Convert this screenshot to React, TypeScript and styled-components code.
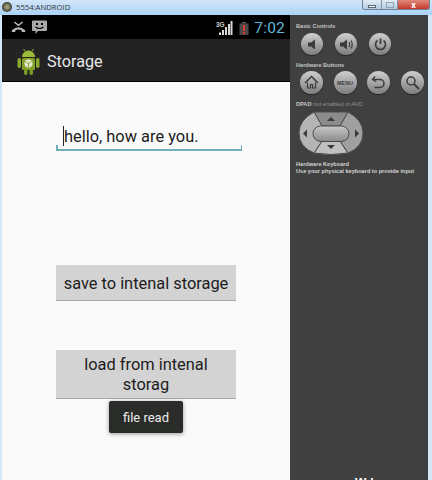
import styled, { createGlobalStyle } from "styled-components";

const GlobalStyle = createGlobalStyle`
  html, body {
    margin: 0;
    padding: 0;
    background: #fff;
  }
  * {
    box-sizing: border-box;
  }
`;

const Window = styled.div`
  width: 432px;
  height: 480px;
  overflow: hidden;
  display: flex;
  flex-direction: column;
  background: #d5e7f6;
  font-family: Roboto, "Liberation Sans", sans-serif;
`;

const TitleBar = styled.div`
  height: 15px;
  flex: none;
  display: flex;
  align-items: flex-start;
  padding-left: 2px;
  background: linear-gradient(#d3e6f8, #a9d3f6);
`;

const TitleIcon = styled.div`
  width: 10px;
  height: 10px;
  margin-top: 2px;
  border-radius: 50%;
  background: radial-gradient(circle, #9a9a70 20%, #30302a 75%);
`;

const TitleText = styled.span`
  margin: 1px 0 0 4px;
  font-family: "Open Sans", "Liberation Sans", sans-serif;
  font-size: 7.7px;
  line-height: 12px;
  color: #333;
`;

const WindowControls = styled.div`
  margin-left: auto;
  margin-right: 2px;
  height: 10px;
  display: flex;
  border: 1px solid #6d8296;
  border-top: 0;
  border-radius: 0 0 3px 3px;
  overflow: hidden;
`;

const WindowButton = styled.div<{ $width: number; $close?: boolean }>`
  width: ${(props) => props.$width}px;
  display: flex;
  align-items: center;
  justify-content: center;
  color: #fff;
  font-size: 9px;
  font-weight: 700;
  background: ${(props) =>
    props.$close
      ? "linear-gradient(#e08a7c, #c5382c)"
      : "linear-gradient(#e2edf6, #b5cbdf)"};
  & + & {
    border-left: 1px solid #7f93a5;
  }
`;

const MinGlyph = styled.div`
  width: 8px;
  height: 3px;
  margin-top: 3px;
  background: #fff;
  border: 1px solid #56687a;
`;

const MaxGlyph = styled.div`
  width: 8px;
  height: 6px;
  background: transparent;
  border: 1px solid #8fa2b4;
`;

const Body = styled.div`
  flex: 1;
  min-height: 0;
  display: flex;
  padding-left: 2px;
  padding-right: 4px;
`;

const Device = styled.div`
  width: 288px;
  flex: none;
  display: flex;
  flex-direction: column;
  background: #fafafa;
`;

const StatusBar = styled.div`
  height: 24px;
  flex: none;
  display: flex;
  align-items: center;
  padding: 0 5px 0 9px;
  background: #000;
`;

const StatusLeft = styled.div`
  display: flex;
  align-items: center;
  gap: 6px;
`;

const StatusRight = styled.div`
  margin-left: auto;
  display: flex;
  align-items: center;
  padding-top: 2px;
`;

const Clock = styled.span`
  margin-left: 5px;
  font-size: 15.5px;
  letter-spacing: 0.2px;
  color: #62b7d6;
`;

const ActionBar = styled.div`
  height: 43px;
  flex: none;
  display: flex;
  align-items: center;
  padding: 3px 0 0 15px;
  gap: 7px;
  background: #232323;
  border-bottom: 1px solid #000;
`;

const AppTitle = styled.span`
  font-size: 16.2px;
  color: #e8e8e8;
`;

const Content = styled.div`
  position: relative;
  flex: 1;
  display: flex;
  flex-direction: column;
  align-items: flex-start;
  padding: 41px 0 0 54px;
`;

const InputField = styled.div`
  position: relative;
  width: 186px;
  height: 28px;
  padding-left: 7px;
  font-size: 16.4px;
  line-height: 27px;
  color: #1c1c1c;
  border-bottom: 2px solid #6fb0bd;
  &::before,
  &::after {
    content: "";
    position: absolute;
    bottom: 0;
    width: 1.5px;
    height: 4px;
    background: #6fb0bd;
  }
  &::before {
    left: 0;
  }
  &::after {
    right: 0;
  }
`;

const Caret = styled.span`
  display: inline-block;
  width: 1px;
  height: 20px;
  vertical-align: -4px;
  background: #222;
`;

const ActionButton = styled.div<{ $height: number; $top: number }>`
  width: 180px;
  height: ${(props) => props.$height}px;
  margin-top: ${(props) => props.$top}px;
  padding: 2px 4px 0;
  display: flex;
  align-items: center;
  justify-content: center;
  text-align: center;
  font-size: 16.4px;
  line-height: 20px;
  color: #1c1c1c;
  background: #d3d3d3;
  border-bottom: 1px solid #a8a8a8;
`;

const Toast = styled.div`
  position: absolute;
  left: 107px;
  top: 319px;
  width: 74px;
  height: 32px;
  display: flex;
  align-items: center;
  justify-content: center;
  font-size: 13px;
  color: #ececec;
  background: #2a2c2a;
  border-radius: 2px;
  box-shadow: 0 1px 4px rgba(0, 0, 0, 0.4);
`;

const Panel = styled.div`
  flex: 1;
  min-width: 0;
  display: flex;
  flex-direction: column;
  overflow: hidden;
  padding: 7px 0 0 6px;
  background: #404040;
  color: #d0d0d0;
  font-family: "Liberation Sans", sans-serif;
  font-size: 5.6px;
  line-height: 8px;
`;

const PanelLabel = styled.div<{ $top?: number }>`
  margin-top: ${(props) => props.$top || 0}px;
  font-weight: 700;
  color: #c4c4c4;
  white-space: nowrap;
`;

const Dim = styled.span`
  font-weight: 400;
  font-size: 5.9px;
  color: #8f8f8f;
`;

const RoundRow = styled.div<{ $top: number; $gap: number; $left: number }>`
  display: flex;
  gap: ${(props) => props.$gap}px;
  margin-top: ${(props) => props.$top}px;
  margin-left: ${(props) => props.$left}px;
`;

const RoundButton = styled.div<{ $size: number }>`
  width: ${(props) => props.$size}px;
  height: ${(props) => props.$size}px;
  display: flex;
  align-items: center;
  justify-content: center;
  border-radius: 50%;
  color: #3c3c3c;
  font-size: 5.4px;
  font-weight: 700;
  background: linear-gradient(#cfcfcf, #7c7c7c);
  box-shadow: 0 1px 1px rgba(0, 0, 0, 0.45);
`;

const DpadWrap = styled.div`
  width: 66px;
  height: 45px;
  margin: 2px 0 0 2px;
`;

const KeyboardNote = styled.div`
  margin-top: 6px;
  color: #d4d4d4;
  font-weight: 700;
  font-size: 5.6px;
  line-height: 7.4px;
  white-space: nowrap;
`;

const ClippedWord = styled.div`
  margin-top: auto;
  margin-bottom: -9px;
  margin-left: 59px;
  font-size: 12px;
  line-height: 12px;
  font-weight: 700;
  color: #fff;
`;

const Ic = ({ children }: { children: React.ReactNode }) => (
  <svg width="15" height="15" viewBox="0 0 15 15" fill="none">
    {children}
  </svg>
);

const AndroidLogo = () => (
  <svg width="23" height="26" viewBox="0 0 23 26">
    <rect x="0.5" y="9" width="3.5" height="10" rx="1.7" fill="#8aa82e" />
    <rect x="19" y="9" width="3.5" height="10" rx="1.7" fill="#8aa82e" />
    <path d="M5 8 A6.5 6.5 0 0 1 18 8 Z" fill="#9aba38" />
    <path d="M8 2 L6.5 0 M15 2 L16.5 0" stroke="#9aba38" strokeWidth="1" />
    <rect x="5" y="9" width="13" height="12" rx="1.5" fill="#82a229" />
    <rect x="7" y="20" width="3.5" height="6" rx="1.7" fill="#7a9a26" />
    <rect x="12.5" y="20" width="3.5" height="6" rx="1.7" fill="#7a9a26" />
    <circle cx="11.5" cy="14.5" r="4" fill="#e4e8cf" />
    <path d="M11.5 14.5 V18 M11.5 14.5 L8.5 12.5 M11.5 14.5 L14.5 12.5" stroke="#82a229" strokeWidth="1" />
  </svg>
);

const DpadIcon = () => (
  <svg width="66" height="45" viewBox="0 0 66 45">
    <defs>
      <linearGradient id="dpc" x1="0" y1="0" x2="0" y2="1">
        <stop offset="0" stopColor="#c8c8c8" />
        <stop offset="1" stopColor="#8a8a8a" />
      </linearGradient>
    </defs>
    <path d="M16 2 L50 2 L42 16 L24 16 Z" fill="#8c8c8c" stroke="#4a4a4a" strokeWidth="1" />
    <path d="M24 31 L42 31 L50 43 Q33 46 16 43 Z" fill="#c0c0c0" stroke="#4a4a4a" strokeWidth="1" />
    <path d="M16 2 L24 16 Q12 24 24 31 L16 43 Q1 37 1 23 Q1 10 16 2 Z" fill="#b4b4b4" stroke="#4a4a4a" strokeWidth="1" />
    <path d="M50 2 L42 16 Q54 24 42 31 L50 43 Q65 37 65 23 Q65 10 50 2 Z" fill="#a0a0a0" stroke="#4a4a4a" strokeWidth="1" />
    <rect x="15" y="16" width="36" height="15.5" rx="7.7" fill="url(#dpc)" stroke="#4a4a4a" strokeWidth="1" />
    <path d="M33 7 L37 11 H29 Z M33 39 L29 35 H37 Z M5 23.5 L9 19.5 V27.5 Z M61 23.5 L57 19.5 V27.5 Z" fill="#3a3a3a" />
  </svg>
);

function App() {
  return (
    <Window>
      <GlobalStyle />
      <TitleBar>
        <TitleIcon />
        <TitleText>5554:ANDROID</TitleText>
        <WindowControls>
          <WindowButton $width={18}>
            <MinGlyph />
          </WindowButton>
          <WindowButton $width={16}>
            <MaxGlyph />
          </WindowButton>
          <WindowButton $width={32} $close>
            x
          </WindowButton>
        </WindowControls>
      </TitleBar>
      <Body>
        <Device>
          <StatusBar>
            <StatusLeft>
              <svg width="15" height="12" viewBox="0 0 18 14" fill="none">
                <path d="M4 1 L9 5 L14 1" stroke="#b8b8b8" strokeWidth="1.8" />
                <path
                  d="M1 11 Q9 3.5 17 11 L17 13 L13 13 L12.5 10.5 Q9 9.3 5.5 10.5 L5 13 L1 13 Z"
                  fill="#b8b8b8"
                />
              </svg>
              <svg width="15" height="15" viewBox="0 0 15 15">
                <path
                  d="M1 0.5 H14 Q15 0.5 15 1.5 V10 Q15 11 14 11 H6 L3.5 14 V11 H1 Q0 11 0 10 V1.5 Q0 0.5 1 0.5 Z"
                  fill="#a8a8a8"
                />
                <path d="M4 3 H6 V5 H4 Z M9 3 H11 V5 H9 Z" fill="#000" />
                <path d="M3.5 7 Q7.5 10 11.5 7" stroke="#000" strokeWidth="1.2" fill="none" />
              </svg>
            </StatusLeft>
            <StatusRight>
              <svg width="17" height="14" viewBox="0 0 17 14">
                <text x="0" y="6" fontSize="6.5" fontWeight="700" fill="#cfcfcf" fontFamily="Liberation Sans">
                  3G
                </text>
                <path d="M3 11.5 H5 V14 H3 Z M6 9 H8 V14 H6 Z M9 6 H11 V14 H9 Z M12 3 H14 V14 H12 Z M14.5 0 H16.5 V14 H14.5 Z" fill="#d8d8d8" />
              </svg>
              <svg width="10" height="13" viewBox="0 0 10 13" style={{ marginLeft: 6 }}>
                <rect x="3" y="0" width="4" height="1.5" fill="#555" />
                <rect x="0.5" y="1.5" width="9" height="11.5" fill="#4a4a48" />
                <rect x="4" y="3" width="2" height="6" fill="#d83a30" />
                <rect x="4" y="10" width="2" height="2" fill="#d83a30" />
              </svg>
              <Clock>7:02</Clock>
            </StatusRight>
          </StatusBar>
          <ActionBar>
            <AndroidLogo />
            <AppTitle>Storage</AppTitle>
          </ActionBar>
          <Content>
            <InputField>
              <Caret />
              hello, how are you.
            </InputField>
            <ActionButton $height={36} $top={114}>
              save to intenal storage
            </ActionButton>
            <ActionButton $height={49} $top={49}>
              load from intenal storag
            </ActionButton>
            <Toast>file read</Toast>
          </Content>
        </Device>
        <Panel>
          <PanelLabel>Basic Controls</PanelLabel>
          <RoundRow $top={3} $gap={12} $left={5}>
            <RoundButton $size={22}>
              <Ic>
                <path d="M3 5.5 H6 L10 2.5 V12.5 L6 9.5 H3 Z" fill="#3c3c3c" />
              </Ic>
            </RoundButton>
            <RoundButton $size={22}>
              <Ic>
                <path d="M1 5.5 H4 L8 2.5 V12.5 L4 9.5 H1 Z" fill="#3c3c3c" />
                <path d="M10 5 Q11.5 7.5 10 10 M12 3.5 Q14.5 7.5 12 11.5" stroke="#3c3c3c" strokeWidth="1.2" />
              </Ic>
            </RoundButton>
            <RoundButton $size={22}>
              <Ic>
                <path d="M7.5 1.5 V7" stroke="#3c3c3c" strokeWidth="1.8" />
                <path d="M4.5 3.5 A5 5 0 1 0 10.5 3.5" stroke="#3c3c3c" strokeWidth="1.6" />
              </Ic>
            </RoundButton>
          </RoundRow>
          <PanelLabel $top={6}>Hardware Buttons</PanelLabel>
          <RoundRow $top={2} $gap={10.5} $left={4}>
            <RoundButton $size={23}>
              <Ic>
                <path d="M1 8 L7.5 1.5 L14 8" stroke="#3c3c3c" strokeWidth="1.5" />
                <path d="M3.5 7.5 V13 H6.5 V9.5 H8.5 V13 H11.5 V7.5" stroke="#3c3c3c" strokeWidth="1.2" />
              </Ic>
            </RoundButton>
            <RoundButton $size={23}>MENU</RoundButton>
            <RoundButton $size={23}>
              <Ic>
                <path d="M4 1.5 L1.5 4.5 L5 6.5" stroke="#3c3c3c" strokeWidth="1.4" />
                <path d="M2 4.5 H9 A4 4 0 0 1 9 12.5 H3.5" stroke="#3c3c3c" strokeWidth="1.5" />
              </Ic>
            </RoundButton>
            <RoundButton $size={23}>
              <Ic>
                <circle cx="6" cy="6" r="4" stroke="#3c3c3c" strokeWidth="1.5" />
                <path d="M9 9 L14 14" stroke="#3c3c3c" strokeWidth="2" />
              </Ic>
            </RoundButton>
          </RoundRow>
          <PanelLabel $top={6}>
            DPAD <Dim>not enabled in AVD</Dim>
          </PanelLabel>
          <DpadWrap>
            <DpadIcon />
          </DpadWrap>
          <KeyboardNote>
            Hardware Keyboard
            <br />
            Use your physical keyboard to provide input
          </KeyboardNote>
          <ClippedWord>Wd</ClippedWord>
        </Panel>
      </Body>
    </Window>
  );
}

export default App;
